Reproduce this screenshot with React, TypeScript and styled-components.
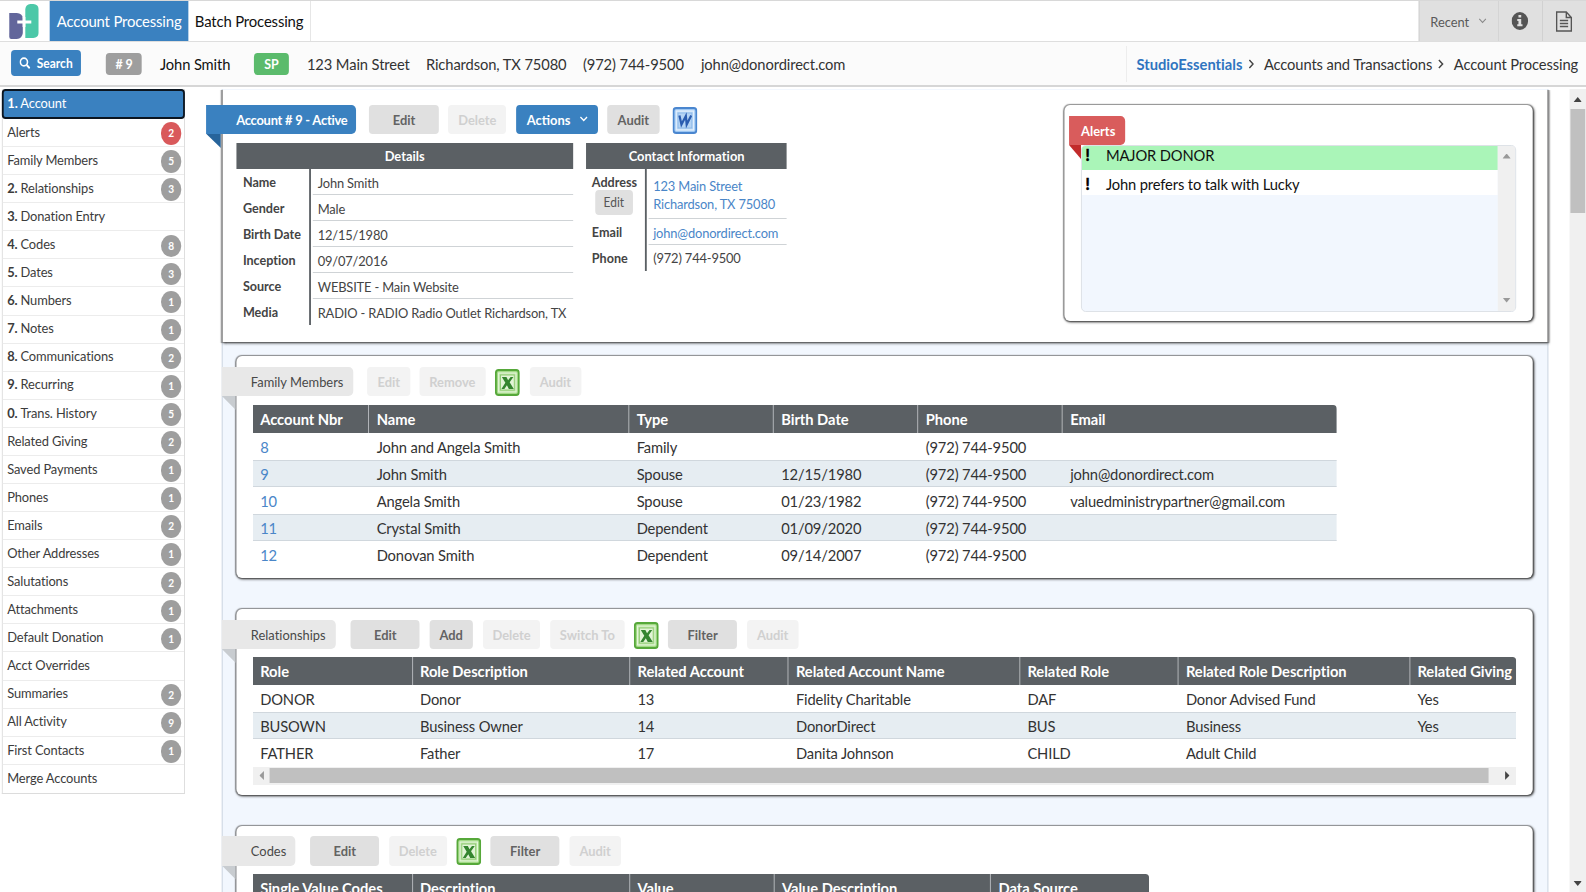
import React from "react";
import styled, { createGlobalStyle, css } from "styled-components";

// The interface is set in a condensed width: lengths along x go through x().
const K = 0.92;
const x = (n: number) => `${(n / K).toFixed(2)}px`;

const raised = css`
  box-shadow: 0 0 1px 1px rgba(80, 80, 80, 0.55), 1px 1px 3px rgba(0, 0, 0, 0.85);
`;

const Global = createGlobalStyle`
  *, *::before, *::after { box-sizing: border-box; }
  html, body { margin: 0; padding: 0; height: 892px; overflow: hidden; background: #fff; }
  body { font-family: Lato, "Liberation Sans", sans-serif; color: #333; font-variant-ligatures: none; }
`;

const Stage = styled.div`
  width: ${x(1586)};
  height: 892px;
  overflow: hidden;
  display: flex;
  flex-direction: column;
  background: #fff;
  transform: scaleX(${K});
  transform-origin: 0 0;
  white-space: nowrap;
`;

/* ---------- top bar ---------- */
const TopBar = styled.header`
  height: 42px;
  flex: none;
  display: flex;
  border-top: 1px solid #d8d8d8;
  border-bottom: 1px solid #dedede;
`;
const LogoBox = styled.div`
  width: ${x(50)};
  padding: 3px 0 0 ${x(8)};
  svg { display: block; }
`;
const Tab = styled.div<{ $w: number; $active?: boolean }>`
  width: ${(p) => x(p.$w)};
  display: flex;
  align-items: center;
  justify-content: center;
  padding-bottom: 2px;
  font-size: 16.2px;
  letter-spacing: -0.18px;
  color: ${(p) => (p.$active ? "#fff" : "#111")};
  background: ${(p) => (p.$active ? "#3a81c0" : "#fff")};
  border-right: ${(p) => (p.$active ? "0" : "1px solid #e4e4e4")};
`;
const Tools = styled.div`
  margin-left: auto;
  display: flex;
`;
const Tool = styled.div<{ $w: number }>`
  width: ${(p) => x(p.$w)};
  display: flex;
  align-items: center;
  justify-content: center;
  gap: 10px;
  padding-right: 1px;
  font-size: 14px;
  color: #5a5a5a;
  background: #e0e0e0;
  border-left: 1px solid #cfcfcf;
`;

/* ---------- summary bar ---------- */
const SummaryBar = styled.div`
  height: 45px;
  flex: none;
  display: flex;
  align-items: center;
  background: #fbfbfb;
  border-bottom: 2px solid #d6d6d6;
  padding-left: ${x(11)};
  font-size: 16px;
  letter-spacing: -0.12px;
`;
const SearchButton = styled.button`
  width: ${x(70)};
  height: 26px;
  margin-right: ${x(25)};
  display: flex;
  align-items: center;
  justify-content: center;
  gap: 7px;
  border: 0;
  border-radius: 4px;
  background: #3a81c0;
  color: #fff;
  font: 700 13px Lato, sans-serif;
  margin-bottom: 2px;
`;
const Tag = styled.span<{ $w: number; $bg: string; $gap: number }>`
  width: ${(p) => x(p.$w)};
  margin-right: ${(p) => x(p.$gap)};
  height: 22px;
  line-height: 22px;
  text-align: center;
  border-radius: 4px;
  background: ${(p) => p.$bg};
  color: #fff;
  font-size: 13.5px;
  font-weight: 700;
`;
const Fact = styled.span<{ $w: number; $strong?: boolean }>`
  width: ${(p) => x(p.$w)};
  color: ${(p) => (p.$strong ? "#111" : "#333")};
`;
const Crumbs = styled.nav`
  margin-left: auto;
  width: ${x(459.5)};
  height: 36px;
  padding-left: ${x(9)};
  display: flex;
  align-items: center;
  border-left: 1px solid #ececec;
`;
const Crumb = styled.span<{ $w: number; $link?: boolean }>`
  flex: none;
  width: ${(p) => x(p.$w)};
  ${(p) => p.$link && css`color: #2f74c0; font-weight: 700; letter-spacing: 0;`}
`;
const CrumbArrow = styled.span<{ $w: number }>`
  flex: none;
  width: ${(p) => x(p.$w)};
  display: flex;
`;

/* ---------- body ---------- */
const Body = styled.div`
  flex: 1;
  min-height: 0;
  display: flex;
  padding-top: 2px;
`;
const Sidebar = styled.aside`
  width: ${x(183)};
  height: 705px;
  margin-left: ${x(2)};
  flex: none;
  border: 1px solid #dcdcdc;
  border-top: 0;
`;
const MenuItem = styled.div<{ $active?: boolean }>`
  height: 28.08px;
  padding: 0 ${x(2.5)} 2.5px ${x(4.3)};
  display: flex;
  align-items: center;
  justify-content: space-between;
  font-size: 14px;
  letter-spacing: -0.13px;
  color: #3c3c3c;
  border-bottom: 1px solid #ececec;
  b { font-weight: 700; }
  &:last-child { border-bottom: 0; }
  ${(p) =>
    p.$active &&
    css`
      height: 30px;
      margin: 0 -1px;
      padding: 0 0 3px ${x(3.5)};
      color: #fff;
      background: #3a81c0;
      border: 2px solid #0b1520;
      border-radius: 4px;
    `}
`;
const Badge = styled.span<{ $red?: boolean }>`
  width: 22.6px;
  height: 22.6px;
  line-height: 22.6px;
  margin-top: 4.5px;
  border-radius: 50%;
  text-align: center;
  font-size: 11px;
  font-weight: 700;
  letter-spacing: 0;
  color: #fff;
  background: ${(p) => (p.$red ? "#d9595b" : "#9e9e9e")};
`;

const Main = styled.main`
  width: ${x(1326.5)};
  height: 803px;
  margin-left: ${x(36.5)};
  flex: none;
  background: #f2f7fe;
  border: 1px solid #c9d3dd;
  border-width: 0 1px;
`;
const Account = styled.section`
  height: 253px;
  margin: 0 -1px;
  padding: 15.5px ${x(14)} 0 ${x(14)};
  display: flex;
  justify-content: space-between;
  background: #fff;
  border: 1px solid #6a6a6a;
  border-width: 0 1px;
  ${raised}
  clip-path: inset(1px -4px -6px -20px);
`;
const Card = styled.section<{ $h: number; $mt: number }>`
  height: ${(p) => p.$h}px;
  margin: ${(p) => p.$mt}px ${x(14.5)} 0 ${x(13.8)};
  padding: 10.5px ${x(17)} 0 ${x(16.7)};
  border-radius: 6px;
  background: #fff;
  ${raised}
`;
const Toolbar = styled.div`
  display: flex;
  align-items: flex-start;
  height: 30px;
`;
const Ribbon = styled.div<{ $w: number; $ml: number; $tone: "blue" | "grey" | "red"; $pad: number; $fold: number }>`
  position: relative;
  flex: none;
  width: ${(p) => x(p.$w)};
  height: 29.5px;
  line-height: 29px;
  margin-left: ${(p) => x(p.$ml)};
  padding-left: ${(p) => x(p.$pad)};
  border-radius: 0 5px 5px 0;
  font-size: 14px;
  font-weight: ${(p) => (p.$tone === "grey" ? 400 : 700)};
  letter-spacing: ${(p) => (p.$tone === "blue" ? -0.25 : 0)}px;
  color: ${(p) => (p.$tone === "grey" ? "#484848" : "#fff")};
  background: ${(p) => ({ blue: "#3a81c0", grey: "#e8e8e8", red: "#d95c5c" })[p.$tone]};
  &::after {
    content: "";
    position: absolute;
    left: 0;
    top: 100%;
    width: ${(p) => x(p.$fold)};
    height: 14px;
    background: ${(p) => ({ blue: "#27649b", grey: "#c8ccd0", red: "#c22b2b" })[p.$tone]};
    clip-path: polygon(0 0, 100% 0, 100% 100%);
  }
`;
const Button = styled.button<{ $w: number; $ml: number; $kind?: "off" | "primary" }>`
  flex: none;
  width: ${(p) => x(p.$w)};
  height: 29.5px;
  margin: 0 0 0 ${(p) => x(p.$ml)};
  padding: 0;
  display: flex;
  align-items: center;
  justify-content: center;
  gap: 10px;
  border: 0;
  border-radius: 4px;
  font: 700 14px Lato, sans-serif;
  color: #636363;
  background: #e0e0e0;
  ${(p) => p.$kind === "off" && css`color: #d0d0d0; background: #f3f3f3;`}
  ${(p) => p.$kind === "primary" && css`color: #fff; background: #3a81c0;`}
`;
const IconSlot = styled.span<{ $ml: number }>`
  flex: none;
  margin: 2.3px 0 0 ${(p) => x(p.$ml)};
  svg { display: block; }
`;

/* ---------- account details ---------- */
const Panels = styled.div`
  display: flex;
  align-items: flex-start;
  gap: ${x(13.5)};
  margin-top: 8px;
`;
const Panel = styled.div<{ $w: number }>`
  width: ${(p) => x(p.$w)};
`;
const PanelHead = styled.div`
  height: 26px;
  line-height: 26px;
  text-align: center;
  font-size: 14px;
  font-weight: 700;
  color: #fff;
  background: #5b6064;
`;
const PairRow = styled.div<{ $h?: number }>`
  height: ${(p) => p.$h ?? 26.1}px;
  display: flex;
`;
const PairLabel = styled.div<{ $w: number; $pad: number }>`
  width: ${(p) => x(p.$w)};
  padding-left: ${(p) => x(p.$pad)};
  flex: none;
  border-right: 2px solid #5b6064;
  font-size: 13.7px;
  font-weight: 700;
  line-height: 26px;
  color: #444;
`;
const PairValue = styled.div<{ $link?: boolean; $last?: boolean }>`
  flex: 1;
  margin-left: 2px;
  padding-left: ${x(5)};
  display: flex;
  flex-direction: column;
  justify-content: center;
  line-height: 18px;
  padding-top: ${(p) => (p.$last ? 1.5 : 3)}px;
  font-size: 14px;
  letter-spacing: -0.17px;
  color: ${(p) => (p.$link ? "#4a86c8" : "#444")};
  border-bottom: ${(p) => (p.$last ? "0" : "1px solid #cfd3d6")};
`;
const SmallEdit = styled.button`
  display: block;
  width: ${x(38)};
  height: 25.5px;
  margin: -5px 0 0 ${x(3)};
  padding: 0;
  border: 0;
  border-radius: 4px;
  background: #e0e0e0;
  color: #555;
  font: 400 13px Lato, sans-serif;
`;

/* ---------- alerts ---------- */
const AlertCard = styled.div`
  width: ${x(468.5)};
  height: 216.5px;
  padding: 11px ${x(17)} 0 ${x(16.5)};
  border-radius: 6px;
  background: #fff;
  ${raised}
`;
const AlertBox = styled.div`
  height: 167px;
  margin-top: -0.5px;
  display: flex;
  border: 1px solid #dde1e6;
  border-radius: 5px;
  background: #f2f7fe;
  overflow: hidden;
`;
const AlertRows = styled.div`
  flex: 1;
`;
const AlertRow = styled.div<{ $hot?: boolean }>`
  height: ${(p) => (p.$hot ? 24 : 25)}px;
  line-height: ${(p) => (p.$hot ? 18 : 28)}px;
  display: flex;
  background: ${(p) => (p.$hot ? "#aaf5b8" : "#fff")};
  color: #111;
  font-size: 16px;
  letter-spacing: -0.15px;
`;
const Bang = styled.span`
  width: ${x(24)};
  padding-left: ${x(3.5)};
  font-size: 16px;
  font-weight: 900;
  color: #000;
  -webkit-text-stroke: 0.5px #000;
`;
const AlertScroll = styled.div`
  width: ${x(17)};
  display: flex;
  flex-direction: column;
  justify-content: space-between;
  align-items: center;
  padding: 8px 0 8px;
  background: #f0f0f0;
`;
const Arrow = styled.i<{ $dir: "up" | "down" | "left" | "right"; $c: string }>`
  flex: none;
  width: ${(p) => (p.$dir === "up" || p.$dir === "down" ? 9 : 5)}px;
  height: ${(p) => (p.$dir === "up" || p.$dir === "down" ? 5 : 9)}px;
  background: ${(p) => p.$c};
  clip-path: polygon(
    ${(p) =>
      ({
        up: "50% 0, 100% 100%, 0 100%",
        down: "0 0, 100% 0, 50% 100%",
        left: "100% 0, 100% 100%, 0 50%",
        right: "0 0, 100% 50%, 0 100%",
      })[p.$dir]}
  );
`;

/* ---------- grids ---------- */
const Grid = styled.div<{ $w: number; $mt: number }>`
  width: ${(p) => x(p.$w)};
  margin-top: ${(p) => p.$mt}px;
  border-radius: 0 4px 0 0;
  overflow: hidden;
`;
const Line = styled.div<{ $cols: number[]; $head?: boolean; $alt?: boolean }>`
  display: grid;
  grid-template-columns: ${(p) => p.$cols.map((c) => x(c)).join(" ")};
  height: ${(p) => (p.$head ? 28 : 27.2)}px;
  background: ${(p) => (p.$head ? "#5b6064" : p.$alt ? "#e6edf2" : "#fff")};
  box-shadow: ${(p) => (p.$alt ? "inset 0 1px #d0d7dd, inset 0 -1px #d0d7dd" : "none")};
`;
const Cell = styled.div<{ $head?: boolean; $link?: boolean }>`
  padding-left: ${x(7.3)};
  line-height: 27.5px;
  font-size: 16px;
  letter-spacing: ${(p) => (p.$head ? -0.04 : -0.15)}px;
  color: ${(p) => (p.$head ? "#fff" : p.$link ? "#4a86c8" : "#333")};
  font-weight: ${(p) => (p.$head ? 700 : 400)};
  ${(p) => p.$head && css`&:not(:last-child) { border-right: 1px solid #b9bcbf; }`}
`;
const HScroll = styled.div`
  height: 18px;
  display: flex;
  align-items: center;
  padding: 0 ${x(6.5)};
  background: #f0f0f0;
`;
const HThumb = styled.div`
  width: ${x(1219)};
  height: 15px;
  margin: 0 ${x(16)} 0 ${x(6)};
  background: #c0c0c0;
`;
const PageScroll = styled.div`
  width: ${x(16.5)};
  margin-left: auto;
  display: flex;
  flex-direction: column;
  align-items: center;
  padding: 8px 0 6px;
  background: #f0f0f0;
`;
const VThumb = styled.div`
  width: ${x(14.5)};
  height: 104px;
  margin: 6.5px 0 auto;
  background: #c0c0c0;
`;

/* ---------- icons ---------- */
const Logo = () => (
  <svg width={33.2} height="36" viewBox="0 0 30.500 36" preserveAspectRatio="none">
    <path d="M1 9h7.500Q14 9.500 14.500 14v15q-.5 5.500-6 6H3q-2 0-2-2z" fill="#62669b" />
    <path d="M17 34V5q.5-4.500 5-5h3q5 .5 5.500 5v24q-.5 4.500-5.500 5z" fill="#4cc8a8" />
    <path d="M9 18h14" stroke="#fff" strokeWidth="2.800" fill="none" />
    <path d="M15.700 13v10" stroke="#fff" strokeWidth="2.800" fill="none" />
  </svg>
);
const Chevron = ({ size = 8, dir = "down", color = "currentColor", sw = 1.6 }: { size?: number; dir?: "down" | "right"; color?: string; sw?: number }) => (
  <svg width={dir === "down" ? size : size * 0.65} height={dir === "down" ? size * 0.65 : size} viewBox={dir === "down" ? "0 0 10 6.5" : "0 0 6.5 10"}>
    <path d={dir === "down" ? "M1 1l4 4 4-4" : "M1 1l4 4-4 4"} fill="none" stroke={color} strokeWidth={sw} />
  </svg>
);
const SearchIcon = () => (
  <svg width="12" height="12" viewBox="0 0 12 12">
    <circle cx="5" cy="5" r="3.900" fill="none" stroke="#fff" strokeWidth="1.700" />
    <path d="M8 8l3.300 3.300" stroke="#fff" strokeWidth="2" />
  </svg>
);
const InfoIcon = () => (
  <svg width="18" height="18" viewBox="0 0 18 18">
    <circle cx="9" cy="9" r="9" fill="#555" />
    <path d="M7.500 3h3v2.500h-3zM6.200 7h4.300v5.200h1.400v2H6.200v-2h1.300V9H6.200z" fill="#e0e0e0" />
  </svg>
);
const DocIcon = () => (
  <svg width="18" height="21" viewBox="0 0 18 21">
    <path d="M1 1h10.500L17 6.500V20H1z M11.500 1v5.500H17" fill="none" stroke="#555" strokeWidth="1.500" />
    <path d="M4.500 9.500h9M4.500 12.500h9M4.500 15.500h9" stroke="#555" strokeWidth="1.500" />
  </svg>
);
const ExcelIcon = () => (
  <svg width="27" height="27" viewBox="0 0 27 27">
    <rect x="1" y="1" width="25" height="25" rx="3" fill="#a3d987" stroke="#56a83a" strokeWidth="2" />
    <rect x="4" y="4" width="19" height="19" fill="#b9e3a3" stroke="#e4f6d9" strokeWidth="1.200" />
    <rect x="6" y="6" width="15" height="15" fill="#e2f4d6" stroke="#8fca72" strokeWidth="1" />
    <path d="M7.500 8h5l1.800 3.200L17 8h3l-4 5.300 4.500 6.700h-5.400l-2.100-3.700L10.200 20H7l4.300-6.200z" fill="#35852f" />
  </svg>
);
const WordIcon = () => (
  <svg width="27" height="27" viewBox="0 0 27 27">
    <rect x="1" y="1" width="25" height="25" rx="3" fill="#9cc6f2" stroke="#4a86cf" strokeWidth="2" />
    <rect x="4" y="4" width="19" height="19" fill="#b9d7f6" stroke="#e3f0fd" strokeWidth="1.400" />
    <rect x="6" y="6" width="15" height="15" fill="#b4d3f4" stroke="#86b4e6" strokeWidth=".8" />
    <path d="M7.500 8.500l2.200 9L14.500 9l.9 8.500L20.300 8.500" fill="none" stroke="#2a5cb0" strokeWidth="2.400" />
  </svg>
);

/* ---------- data ---------- */
const menu: [string, string, number][] = [
  ["", "Alerts", 2], ["", "Family Members", 5], ["2.", "Relationships", 3], ["3.", "Donation Entry", 0],
  ["4.", "Codes", 8], ["5.", "Dates", 3], ["6.", "Numbers", 1], ["7.", "Notes", 1], ["8.", "Communications", 2],
  ["9.", "Recurring", 1], ["0.", "Trans. History", 5], ["", "Related Giving", 2], ["", "Saved Payments", 1],
  ["", "Phones", 1], ["", "Emails", 2], ["", "Other Addresses", 1], ["", "Salutations", 2], ["", "Attachments", 1],
  ["", "Default Donation", 1], ["", "Acct Overrides", 0], ["", "Summaries", 2], ["", "All Activity", 9],
  ["", "First Contacts", 1], ["", "Merge Accounts", 0],
];
const details = [
  ["Name", "John Smith"], ["Gender", "Male"], ["Birth Date", "12/15/1980"], ["Inception", "09/07/2016"],
  ["Source", "WEBSITE - Main Website"], ["Media", "RADIO - RADIO Radio Outlet Richardson, TX"],
];
const family = {
  cols: [116.5, 260, 144.5, 144.5, 144.5, 273.5],
  head: ["Account Nbr", "Name", "Type", "Birth Date", "Phone", "Email"],
  rows: [
    ["8", "John and Angela Smith", "Family", "", "(972) 744-9500", ""],
    ["9", "John Smith", "Spouse", "12/15/1980", "(972) 744-9500", "john@donordirect.com"],
    ["10", "Angela Smith", "Spouse", "01/23/1982", "(972) 744-9500", "valuedministrypartner@gmail.com"],
    ["11", "Crystal Smith", "Dependent", "01/09/2020", "(972) 744-9500", ""],
    ["12", "Donovan Smith", "Dependent", "09/14/2007", "(972) 744-9500", ""],
  ],
};
const relations = {
  cols: [159.8, 217.5, 158.5, 231.5, 158.5, 231.5, 106],
  head: ["Role", "Role Description", "Related Account", "Related Account Name", "Related Role", "Related Role Description", "Related Giving"],
  rows: [
    ["DONOR", "Donor", "13", "Fidelity Charitable", "DAF", "Donor Advised Fund", "Yes"],
    ["BUSOWN", "Business Owner", "14", "DonorDirect", "BUS", "Business", "Yes"],
    ["FATHER", "Father", "17", "Danita Johnson", "CHILD", "Adult Child", ""],
  ],
};
const codes = {
  cols: [159.8, 217.5, 144.5, 216.5, 158],
  head: ["Single Value Codes", "Description", "Value", "Value Description", "Data Source"],
  rows: [] as string[][],
};

type TableData = { cols: number[]; head: string[]; rows: string[][] };
const Table = ({ data, mt, links, children }: { data: TableData; mt: number; links?: boolean; children?: React.ReactNode }) => (
  <Grid $w={data.cols.reduce((a, b) => a + b, 0)} $mt={mt}>
    <Line $cols={data.cols} $head>
      {data.head.map((h) => <Cell key={h} $head>{h}</Cell>)}
    </Line>
    {data.rows.map((r, i) => (
      <Line key={i} $cols={data.cols} $alt={i % 2 === 1}>
        {r.map((c, j) => <Cell key={j} $link={links && j === 0}>{c}</Cell>)}
      </Line>
    ))}
    {children}
  </Grid>
);

export default function App() {
  return (
    <>
      <Global />
      <Stage>
        <TopBar>
          <LogoBox><Logo /></LogoBox>
          <Tab $w={138.3} $active>Account Processing</Tab>
          <Tab $w={122.5}>Batch Processing</Tab>
          <Tools>
            <Tool $w={79}>Recent <Chevron size={9} sw={1.2} color="#888" /></Tool>
            <Tool $w={44}><InfoIcon /></Tool>
            <Tool $w={44}><DocIcon /></Tool>
          </Tools>
        </TopBar>

        <SummaryBar>
          <SearchButton><SearchIcon />Search</SearchButton>
          <Tag $w={36} $bg="#9e9e9e" $gap={18}># 9</Tag>
          <Fact $w={94} $strong>John Smith</Fact>
          <Tag $w={35} $bg="#5bbb6c" $gap={18}>SP</Tag>
          <Fact $w={119}>123 Main Street</Fact>
          <Fact $w={157}>Richardson, TX 75080</Fact>
          <Fact $w={118}>(972) 744-9500</Fact>
          <Fact $w={150}>john@donordirect.com</Fact>
          <Crumbs>
            <Crumb $w={112} $link>StudioEssentials</Crumb>
            <CrumbArrow $w={15.5}><Chevron dir="right" size={10} color="#444" /></CrumbArrow>
            <Crumb $w={174.5}>Accounts and Transactions</Crumb>
            <CrumbArrow $w={15.5}><Chevron dir="right" size={10} color="#444" /></CrumbArrow>
            <Crumb $w={126}>Account Processing</Crumb>
          </Crumbs>
        </SummaryBar>

        <Body>
          <Sidebar>
            <MenuItem $active><span><b>1.</b> Account</span></MenuItem>
            {menu.map(([n, label, count]) => (
              <MenuItem key={label}>
                <span>{n && <b>{n} </b>}{label}</span>
                {count > 0 && <Badge $red={label === "Alerts"}>{count}</Badge>}
              </MenuItem>
            ))}
          </Sidebar>

          <Main>
            <Account>
              <div>
                <Toolbar>
                  <Ribbon $w={150} $ml={-30} $tone="blue" $pad={29.8} $fold={14.5}>Account # 9 - Active</Ribbon>
                  <Button $w={69.5} $ml={13}>Edit</Button>
                  <Button $w={58} $ml={9.5} $kind="off">Delete</Button>
                  <Button $w={82} $ml={10} $kind="primary">Actions <Chevron size={9} /></Button>
                  <Button $w={52} $ml={9}>Audit</Button>
                  <IconSlot $ml={13.5}><WordIcon /></IconSlot>
                </Toolbar>
                <Panels>
                  <Panel $w={336.5}>
                    <PanelHead>Details</PanelHead>
                    {details.map(([k, v], i) => (
                      <PairRow key={k}>
                        <PairLabel $w={74.5} $pad={6.5}>{k}</PairLabel>
                        <PairValue $last={i === details.length - 1}>{v}</PairValue>
                      </PairRow>
                    ))}
                  </Panel>
                  <Panel $w={200.5}>
                    <PanelHead>Contact Information</PanelHead>
                    <PairRow $h={50}>
                      <PairLabel $w={60} $pad={5.5}>Address<SmallEdit>Edit</SmallEdit></PairLabel>
                      <PairValue $link><span>123 Main Street</span><span>Richardson, TX 75080</span></PairValue>
                    </PairRow>
                    <PairRow>
                      <PairLabel $w={60} $pad={5.5}>Email</PairLabel>
                      <PairValue $link>john@donordirect.com</PairValue>
                    </PairRow>
                    <PairRow>
                      <PairLabel $w={60} $pad={5.5}>Phone</PairLabel>
                      <PairValue $last>(972) 744-9500</PairValue>
                    </PairRow>
                  </Panel>
                </Panels>
              </div>
              <AlertCard>
                <Ribbon $w={56} $ml={-12} $tone="red" $pad={12} $fold={12}>Alerts</Ribbon>
                <AlertBox>
                  <AlertRows>
                    <AlertRow $hot><Bang>!</Bang>MAJOR DONOR</AlertRow>
                    <AlertRow><Bang>!</Bang>John prefers to talk with Lucky</AlertRow>
                  </AlertRows>
                  <AlertScroll><Arrow $dir="up" $c="#999" /><Arrow $dir="down" $c="#999" /></AlertScroll>
                </AlertBox>
              </AlertCard>
            </Account>

            <Card $h={222} $mt={14}>
              <Toolbar>
                <Ribbon $w={131} $ml={-31} $tone="grey" $pad={29} $fold={14}>Family Members</Ribbon>
                <Button $w={43} $ml={14.5} $kind="off">Edit</Button>
                <Button $w={66} $ml={9} $kind="off">Remove</Button>
                <IconSlot $ml={10}><ExcelIcon /></IconSlot>
                <Button $w={51.5} $ml={9.5} $kind="off">Audit</Button>
              </Toolbar>
              <Table data={family} mt={8} links />
            </Card>

            <Card $h={186} $mt={31}>
              <Toolbar>
                <Ribbon $w={113.5} $ml={-31} $tone="grey" $pad={29} $fold={14}>Relationships</Ribbon>
                <Button $w={69} $ml={15.5}>Edit</Button>
                <Button $w={43.5} $ml={9.5}>Add</Button>
                <Button $w={57.5} $ml={10} $kind="off">Delete</Button>
                <Button $w={74} $ml={10} $kind="off">Switch To</Button>
                <IconSlot $ml={9.5}><ExcelIcon /></IconSlot>
                <Button $w={69} $ml={9.5}>Filter</Button>
                <Button $w={51} $ml={10} $kind="off">Audit</Button>
              </Toolbar>
              <Table data={relations} mt={7.5}>
                <HScroll>
                  <Arrow $dir="left" $c="#999" />
                  <HThumb />
                  <Arrow $dir="right" $c="#444" />
                </HScroll>
              </Table>
            </Card>

            <Card $h={186} $mt={30.5}>
              <Toolbar>
                <Ribbon $w={73.5} $ml={-31} $tone="grey" $pad={29} $fold={14}>Codes</Ribbon>
                <Button $w={69} $ml={15}>Edit</Button>
                <Button $w={58} $ml={9.5} $kind="off">Delete</Button>
                <IconSlot $ml={9.5}><ExcelIcon /></IconSlot>
                <Button $w={69} $ml={9.5}>Filter</Button>
                <Button $w={51} $ml={10} $kind="off">Audit</Button>
              </Toolbar>
              <Table data={codes} mt={8} />
            </Card>
          </Main>

          <PageScroll>
            <Arrow $dir="up" $c="#444" />
            <VThumb />
            <Arrow $dir="down" $c="#444" />
          </PageScroll>
        </Body>
      </Stage>
    </>
  );
}
